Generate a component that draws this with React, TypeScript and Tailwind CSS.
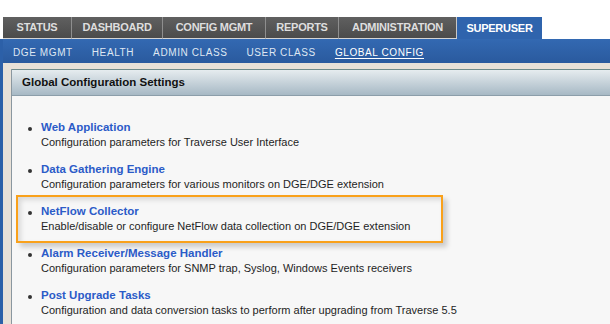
import React from "react";

const tabs = [
  { label: "STATUS", w: "w-[69px]" },
  { label: "DASHBOARD", w: "w-[91px]" },
  { label: "CONFIG MGMT", w: "w-[103px]" },
  { label: "REPORTS", w: "w-[73px]" },
  { label: "ADMINISTRATION", w: "w-[118px]" },
];

const subs = ["DGE MGMT", "HEALTH", "ADMIN CLASS", "USER CLASS"];

const items = [
  { t: "Web Application", d: "Configuration parameters for Traverse User Interface" },
  { t: "Data Gathering Engine", d: "Configuration parameters for various monitors on DGE/DGE extension" },
  { t: "NetFlow Collector", d: "Enable/disable or configure NetFlow data collection on DGE/DGE extension" },
  { t: "Alarm Receiver/Message Handler", d: "Configuration parameters for SNMP trap, Syslog, Windows Events receivers" },
  { t: "Post Upgrade Tasks", d: "Configuration and data conversion tasks to perform after upgrading from Traverse 5.5" },
];

export default function App() {
  return (
    <div className="w-[610px] h-[324px] overflow-hidden bg-white font-['Liberation_Sans',Arial,sans-serif]">
      <div className="h-[17px]" />
      <div className="flex h-[22px] pl-[3px]">
        {tabs.map((t, i) => (
          <div
            key={t.label}
            className={`${t.w} h-[22px] shrink-0 flex items-center justify-center bg-gradient-to-b from-[#606060] to-[#4b4b4b] border-b border-b-[#d4d4d4] border-r ${
              i === tabs.length - 1 ? "border-r-[#c8c8c8]" : "border-r-[#8e8e8e]"
            } text-[11px] font-bold text-[#dedede] tracking-[-0.25px]`}
          >
            {t.label}
          </div>
        ))}
        <div className="w-[85px] h-[22px] shrink-0 flex items-center justify-center bg-[#2f64ad] text-[11px] font-bold text-white tracking-[-0.25px]">
          SUPERUSER
        </div>
      </div>
      <div className="border-l-[3px] border-l-[#2c60a8] bg-[#e8e1d8] h-[285px] flex flex-col overflow-hidden">
        <div className="h-[24px] shrink-0 flex items-center gap-[19px] pl-[10px] pt-[2px] bg-gradient-to-b from-[#3369b2] to-[#2a5a9e] text-[10px] tracking-[0.6px] text-[#dfe7f3]">
          {subs.map((s) => (
            <span key={s}>{s}</span>
          ))}
          <span className="text-white underline underline-offset-[2px]">GLOBAL CONFIG</span>
        </div>
        <div className="h-[6px] shrink-0" />
        <div className="flex-1 ml-[8px] border-l border-l-[#8a97a0] flex flex-col min-h-0 overflow-hidden">
          <div className="h-[27px] shrink-0 border-t border-t-[#6f8b8b] border-b border-b-[#8c9eaa] bg-gradient-to-b from-[#e6ecef] to-[#a7b9c5] flex items-center pl-[10px] text-[11.5px] font-bold text-[#111]">
            Global Configuration Settings
          </div>
          <div className="flex-1 min-h-0 bg-[#f7f7f7] relative pt-[24px] pl-[16px]">
            {items.map((it) => (
              <div key={it.t} className="flex mb-[12px]">
                <div className="w-[13px] shrink-0">
                  <div className="w-[4px] h-[4px] rounded-full bg-[#333] mt-[7px]" />
                </div>
                <div>
                  <div className="text-[11.5px] leading-[15px] font-bold text-[#2b5bc8]">{it.t}</div>
                  <div className="text-[11px] leading-[15px] text-[#1e1e1e]">{it.d}</div>
                </div>
              </div>
            ))}
            <div className="absolute left-[4px] top-[99px] w-[427px] h-[48px] border-2 border-[#f9a11b] shadow-[4px_4px_5px_rgba(0,0,0,0.18),inset_3px_3px_5px_rgba(0,0,0,0.12)]" />
          </div>
        </div>
      </div>
    </div>
  );
}
